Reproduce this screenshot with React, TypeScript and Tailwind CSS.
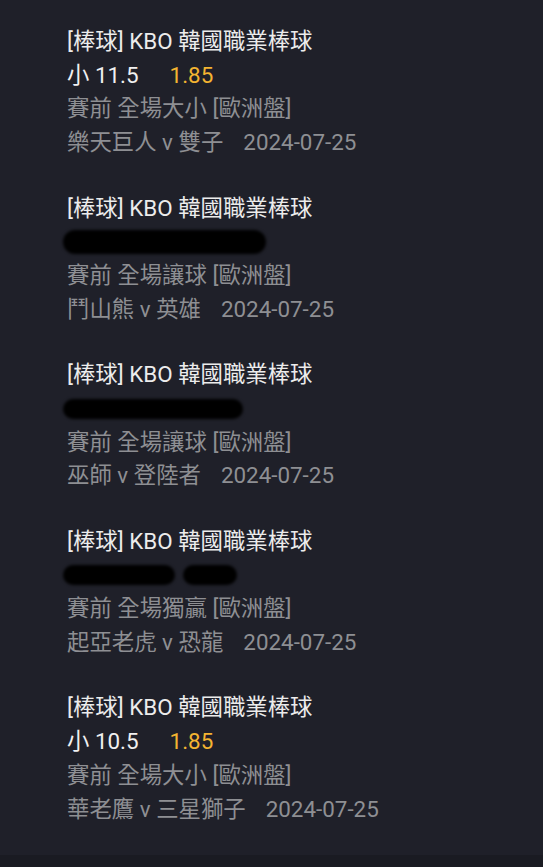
import React from 'react';

type Bet = {
  pick?: string;
  odds?: string;
  redact?: { w: number; h: number; ml?: number }[];
  market: string;
  home: string;
  away: string;
  date: string;
};

const bets: Bet[] = [
  { pick: '小 11.5', odds: '1.85', market: '賽前 全場大小 [歐洲盤]', home: '樂天巨人', away: '雙子', date: '2024-07-25' },
  { redact: [{ w: 203, h: 24 }], market: '賽前 全場讓球 [歐洲盤]', home: '鬥山熊', away: '英雄', date: '2024-07-25' },
  { redact: [{ w: 180, h: 20 }], market: '賽前 全場讓球 [歐洲盤]', home: '巫師', away: '登陸者', date: '2024-07-25' },
  { redact: [{ w: 112, h: 20 }, { w: 54, h: 20, ml: 8 }], market: '賽前 全場獨贏 [歐洲盤]', home: '起亞老虎', away: '恐龍', date: '2024-07-25' },
  { pick: '小 10.5', odds: '1.85', market: '賽前 全場大小 [歐洲盤]', home: '華老鷹', away: '三星獅子', date: '2024-07-25' },
];

function BetItem({ bet }: { bet: Bet }) {
  return (
    <div className="flex flex-col text-[22.4px] leading-[33.7px]">
      <div className="text-[#ececec]">[棒球] KBO 韓國職業棒球</div>
      {bet.pick ? (
        <div className="flex text-[#f0f0f0]">
          <span>{bet.pick}</span>
          <span className="ml-[31px] text-[#f4b431]">{bet.odds}</span>
        </div>
      ) : (
        <div className="flex h-[33.7px] items-center -ml-1">
          {bet.redact!.map((r, i) => (
            <div
              key={i}
              className="rounded-full bg-black blur-[1.5px]"
              style={{ width: r.w, height: r.h, marginLeft: r.ml ?? 0 }}
            />
          ))}
        </div>
      )}
      <div className="text-[#8e8f93]">{bet.market}</div>
      <div className="flex text-[#8e8f93]">
        <span>
          {bet.home} v {bet.away}
        </span>
        <span className="ml-[20px]">{bet.date}</span>
      </div>
    </div>
  );
}

export default function App() {
  return (
    <div
      className="flex min-h-[867px] w-full flex-col bg-[#1f2029]"
      style={{ fontFamily: "Roboto, 'Noto Sans CJK TC', sans-serif" }}
    >
      <div className="flex flex-1 flex-col gap-[31.8px] pl-[67px] pt-[25px]">
        {bets.map((b, i) => (
          <BetItem key={i} bet={b} />
        ))}
      </div>
      <div className="h-[12px] bg-[#1a1b22]" />
    </div>
  );
}
